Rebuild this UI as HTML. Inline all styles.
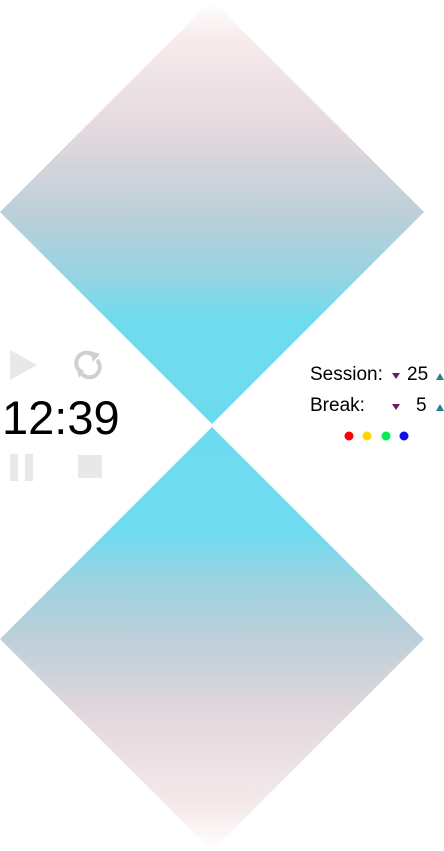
<!DOCTYPE html>
<html><head><meta charset="utf-8"><style>
html,body{margin:0;padding:0;background:#fff;width:444px;height:851px;overflow:hidden;position:relative;font-family:"Liberation Sans","DejaVu Sans",sans-serif}
svg{position:absolute;left:0;top:0}
.t{position:absolute;color:#000}
</style></head><body>
<svg width="444" height="851">
<defs>
<linearGradient id="g1" x1="0" y1="0" x2="0" y2="424" gradientUnits="userSpaceOnUse">
<stop offset="0" stop-color="#ffffff"/>
<stop offset="0.1" stop-color="#f6eaeb"/>
<stop offset="0.32" stop-color="#e2d8dd"/>
<stop offset="0.5" stop-color="#bdcfd9"/>
<stop offset="0.64" stop-color="#9ad3e1"/>
<stop offset="0.75" stop-color="#6fdbef"/>
<stop offset="1" stop-color="#6ddbef"/>
</linearGradient>
<linearGradient id="g2" x1="0" y1="851" x2="0" y2="427" gradientUnits="userSpaceOnUse">
<stop offset="0" stop-color="#ffffff"/>
<stop offset="0.1" stop-color="#f6eaeb"/>
<stop offset="0.32" stop-color="#e2d8dd"/>
<stop offset="0.5" stop-color="#bdcfd9"/>
<stop offset="0.64" stop-color="#9ad3e1"/>
<stop offset="0.75" stop-color="#6fdbef"/>
<stop offset="1" stop-color="#6ddbef"/>
</linearGradient>
</defs>
<polygon points="212,0 424,212 212,424 0,212" fill="url(#g1)"/>
<polygon points="212,427 424,639 212,851 0,639" fill="url(#g2)"/>
<polygon points="10,350 37,365 10,380" fill="#e8e8e8"/>
<g fill="none" stroke="#cfcfcf" stroke-width="4">
<path d="M79,370 A10,10 0 0 1 94,356"/>
<path d="M97,360 A10,10 0 0 1 82,374"/>
</g>
<polygon points="90,351 100,354 93,362" fill="#cfcfcf"/>
<polygon points="76,366 84,371 79,378" fill="#cfcfcf"/>
<rect x="10" y="454" width="8" height="27" fill="#e8e8e8"/>
<rect x="25" y="454" width="8" height="27" fill="#e8e8e8"/>
<rect x="78" y="455" width="24" height="23" fill="#e8e8e8"/>
<polygon points="392,373 400,373 396,379" fill="#6a1a6a"/>
<polygon points="392,404 400,404 396,410" fill="#6a1a6a"/>
<polygon points="436,380 444,380 440,373" fill="#2f7f92"/>
<polygon points="436,411 444,411 440,404" fill="#2f7f92"/>
<circle cx="349" cy="436" r="4.5" fill="#ff0000"/>
<circle cx="367" cy="436" r="4.5" fill="#ffd700"/>
<circle cx="386" cy="436" r="4.5" fill="#00ee55"/>
<circle cx="404" cy="436" r="4.5" fill="#1010ee"/>
</svg>
<div class="t" style="left:2px;top:390px;font-size:47px;line-height:56px">12:39</div>
<div class="t" style="left:310px;top:363px;font-size:19px;line-height:24px">Session:</div>
<div class="t" style="left:407px;top:363px;font-size:19px;line-height:24px">25</div>
<div class="t" style="left:310px;top:394px;font-size:19px;line-height:24px">Break:</div>
<div class="t" style="left:416px;top:394px;font-size:19px;line-height:24px">5</div>
</body></html>
